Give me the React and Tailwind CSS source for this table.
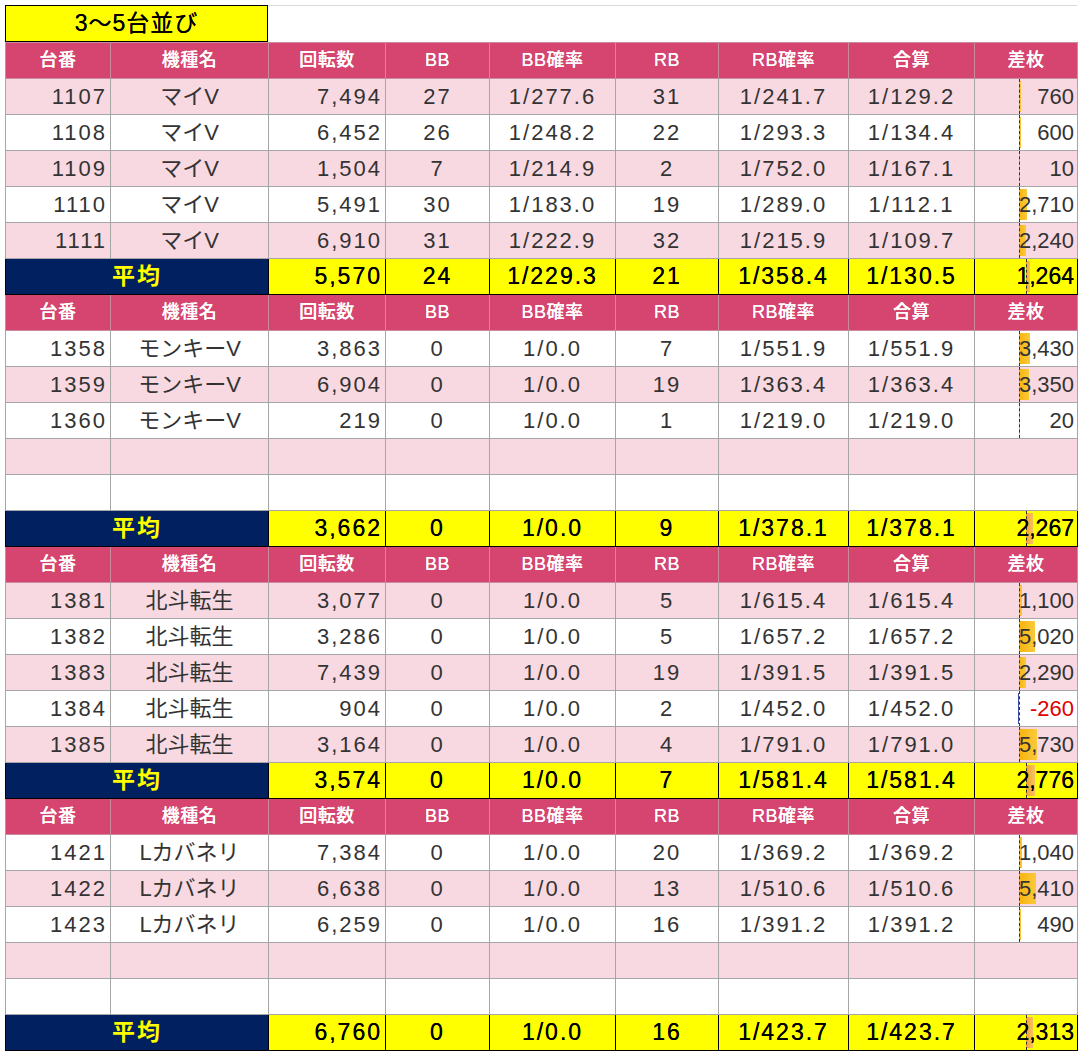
import React from "react";

const groups = [
  {
    startPink: true,
    rows: [
      ["1107", "マイV", "7,494", "27", "1/277.6", "31", "1/241.7", "1/129.2", 760],
      ["1108", "マイV", "6,452", "26", "1/248.2", "22", "1/293.3", "1/134.4", 600],
      ["1109", "マイV", "1,504", "7", "1/214.9", "2", "1/752.0", "1/167.1", 10],
      ["1110", "マイV", "5,491", "30", "1/183.0", "19", "1/289.0", "1/112.1", 2710],
      ["1111", "マイV", "6,910", "31", "1/222.9", "32", "1/215.9", "1/109.7", 2240],
    ],
    avg: ["5,570", "24", "1/229.3", "21", "1/358.4", "1/130.5", 1264],
  },
  {
    startPink: false,
    rows: [
      ["1358", "モンキーV", "3,863", "0", "1/0.0", "7", "1/551.9", "1/551.9", 3430],
      ["1359", "モンキーV", "6,904", "0", "1/0.0", "19", "1/363.4", "1/363.4", 3350],
      ["1360", "モンキーV", "219", "0", "1/0.0", "1", "1/219.0", "1/219.0", 20],
      null,
      null,
    ],
    avg: ["3,662", "0", "1/0.0", "9", "1/378.1", "1/378.1", 2267],
  },
  {
    startPink: true,
    rows: [
      ["1381", "北斗転生", "3,077", "0", "1/0.0", "5", "1/615.4", "1/615.4", 1100],
      ["1382", "北斗転生", "3,286", "0", "1/0.0", "5", "1/657.2", "1/657.2", 5020],
      ["1383", "北斗転生", "7,439", "0", "1/0.0", "19", "1/391.5", "1/391.5", 2290],
      ["1384", "北斗転生", "904", "0", "1/0.0", "2", "1/452.0", "1/452.0", -260],
      ["1385", "北斗転生", "3,164", "0", "1/0.0", "4", "1/791.0", "1/791.0", 5730],
    ],
    avg: ["3,574", "0", "1/0.0", "7", "1/581.4", "1/581.4", 2776],
  },
  {
    startPink: false,
    rows: [
      ["1421", "Lカバネリ", "7,384", "0", "1/0.0", "20", "1/369.2", "1/369.2", 1040],
      ["1422", "Lカバネリ", "6,638", "0", "1/0.0", "13", "1/510.6", "1/510.6", 5410],
      ["1423", "Lカバネリ", "6,259", "0", "1/0.0", "16", "1/391.2", "1/391.2", 490],
      null,
      null,
    ],
    avg: ["6,760", "0", "1/0.0", "16", "1/423.7", "1/423.7", 2313],
  },
];

const headers = ["台番", "機種名", "回転数", "BB", "BB確率", "RB", "RB確率", "合算", "差枚"];
const widths = [105, 158, 117, 104, 126, 103, 130, 126, 103];

const fmt = (n) => n.toLocaleString("en-US");

function DiffCell({ value, avg }) {
  const axis = avg ? 51 : 44;
  const w = Math.max(1, Math.round(Math.abs(value) * 0.0031));
  const neg = value < 0;
  return (
    <td
      className={
        "relative text-right pr-[3px] " +
        (avg ? "border border-black bg-[#ffff00]" : "border border-[#a6a6a6]")
      }
    >
      <div
        className={
          "absolute top-[2px] bottom-[2px] " +
          (avg
            ? "bg-gradient-to-r from-[#f5a623] to-[#f8c060]"
            : neg
            ? "bg-[#3a4fa0]"
            : "bg-gradient-to-r from-[#f6b400] to-[#fbc93a]")
        }
        style={neg ? { left: axis - w, width: w } : { left: axis, width: w }}
      />
      <div
        className="absolute top-0 bottom-0 border-l border-dashed border-[#333]"
        style={{ left: axis }}
      />
      <span className={"relative " + (neg ? "text-[#e00000]" : "")}>{fmt(value)}</span>
    </td>
  );
}

function HeaderRow() {
  return (
    <tr className="h-[36px] bg-[#d5456f] text-white text-[18px] font-medium [text-shadow:0_0_0.6px_white]">
      {headers.map((h) => (
        <td key={h} className="border border-[#c98ba0] text-center tracking-[0.5px]">
          {h}
        </td>
      ))}
    </tr>
  );
}

function DataRow({ row, pink }) {
  const bg = pink ? "bg-[#f8d9e2]" : "bg-white";
  const cell = "border border-[#a6a6a6] tracking-[2px]";
  if (!row) {
    return (
      <tr className={"h-[36px] " + bg}>
        {widths.map((_, i) => (
          <td key={i} className={cell} />
        ))}
      </tr>
    );
  }
  return (
    <tr className={"h-[36px] text-[22px] text-[#333] " + bg}>
      <td className={cell + " text-right pr-[3px]"}>{row[0]}</td>
      <td className="border border-[#a6a6a6] text-center">{row[1]}</td>
      <td className={cell + " text-right pr-[3px]"}>{row[2]}</td>
      <td className={cell + " text-center"}>{row[3]}</td>
      <td className={cell + " text-center"}>{row[4]}</td>
      <td className={cell + " text-center"}>{row[5]}</td>
      <td className={cell + " text-center"}>{row[6]}</td>
      <td className={cell + " text-center"}>{row[7]}</td>
      <DiffCell value={row[8]} />
    </tr>
  );
}

function AvgRow({ avg }) {
  const cell = "border border-black bg-[#ffff00] tracking-[2px]";
  return (
    <tr className="h-[36px] text-[23px] text-black [text-shadow:0_0_0.5px_black]">
      <td colSpan={2} className="border border-black bg-[#002060] text-center text-[#ffff00] font-bold tracking-[2px]">
        平均
      </td>
      <td className={cell + " text-right pr-[3px]"}>{avg[0]}</td>
      <td className={cell + " text-center"}>{avg[1]}</td>
      <td className={cell + " text-center"}>{avg[2]}</td>
      <td className={cell + " text-center"}>{avg[3]}</td>
      <td className={cell + " text-center"}>{avg[4]}</td>
      <td className={cell + " text-center"}>{avg[5]}</td>
      <DiffCell value={avg[6]} avg />
    </tr>
  );
}

export default function App() {
  return (
    <div className="min-h-screen w-full bg-white pl-[5px] pt-[5px] font-['Liberation_Sans','Noto_Sans_CJK_JP',sans-serif]">
      <div className="flex w-[1072px]">
        <div className="w-[263px] h-[37px] bg-[#ffff00] border border-black flex items-center justify-center text-[23px] tracking-[1px] text-black [text-shadow:0_0_0.5px_black]">
          3～5台並び
        </div>
        <div className="flex-1 border-t border-[#dadada]" />
      </div>
      <table className="table-fixed border-collapse w-[1072px]">
        <colgroup>
          {widths.map((w, i) => (
            <col key={i} style={{ width: w }} />
          ))}
        </colgroup>
        <tbody>
          {groups.map((g, gi) => (
            <React.Fragment key={gi}>
              <HeaderRow />
              {g.rows.map((r, ri) => (
                <DataRow key={ri} row={r} pink={(ri % 2 === 0) === g.startPink} />
              ))}
              <AvgRow avg={g.avg} />
            </React.Fragment>
          ))}
        </tbody>
      </table>
    </div>
  );
}
